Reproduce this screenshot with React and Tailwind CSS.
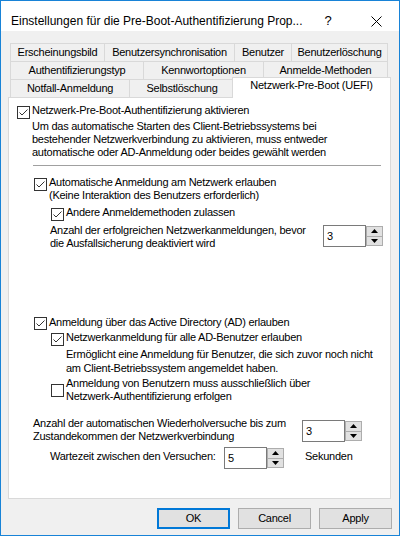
import React from "react";

function CheckBox({ checked }) {
  return (
    <span className="flex h-[13px] w-[13px] shrink-0 items-center justify-center border border-[#333333] bg-white">
      {checked && (
        <svg width="11" height="11" viewBox="0 0 11 11">
          <path d="M1.5 5.5 L4 8 L9.5 2.5" fill="none" stroke="#333333" strokeWidth="1" />
        </svg>
      )}
    </span>
  );
}

function Arrow({ up }) {
  return (
    <svg width="7" height="4" viewBox="0 0 7 4">
      {up ? <path d="M3.5 0 L7 4 L0 4 Z" fill="#000" /> : <path d="M0 0 L7 0 L3.5 4 Z" fill="#000" />}
    </svg>
  );
}

function Spinner({ value }) {
  return (
    <div className="flex h-[22px] w-[60px] shrink-0">
      <div className="w-[43px] border border-[#7a7a7a] bg-white pl-[3px] leading-[20px]">{value}</div>
      <div className="flex w-[17px] flex-col py-[1px]">
        <div className="flex flex-1 items-center justify-center border border-[#adadad] bg-[#e1e1e1]">
          <Arrow up />
        </div>
        <div className="flex flex-1 items-center justify-center border border-t-0 border-[#adadad] bg-[#e1e1e1]">
          <Arrow />
        </div>
      </div>
    </div>
  );
}

function Tab({ w, last, children }) {
  return (
    <div
      style={{ width: w }}
      className={`flex h-[18px] shrink-0 items-center justify-center border-l border-t border-[#d9d9d9] bg-[#f0f0f0] ${
        last ? "border-r" : ""
      }`}
    >
      {children}
    </div>
  );
}

function Button({ children, primary }) {
  return (
    <div
      className={`flex h-[21px] w-[73px] items-center justify-center bg-[#e1e1e1] ${
        primary ? "border-2 border-[#0078d7]" : "border border-[#adadad]"
      }`}
    >
      {children}
    </div>
  );
}

export default function App() {
  return (
    <div className="h-[539px] w-[402px] bg-white font-['Liberation_Sans',Arial,sans-serif] text-[11px] leading-[13px] tracking-[-0.25px] text-black">
      <div className="flex h-[536px] w-[400px] flex-col border border-[#1883d7] bg-[#f0f0f0]">
        {/* title bar */}
        <div className="flex h-[30px] shrink-0 items-center bg-white pl-[10px] pt-[10px] text-[12px] leading-[16px] tracking-normal">
          <span>Einstellungen für die Pre-Boot-Authentifizierung Prop...</span>
          <span className="ml-auto w-[20px] text-center text-[13px]">?</span>
          <svg className="ml-[33px] mr-[17px]" width="11" height="11" viewBox="0 0 11 11">
            <path d="M0.5 0.5 L10.5 10.5 M10.5 0.5 L0.5 10.5" stroke="#000" strokeWidth="1" />
          </svg>
        </div>

        {/* tabs */}
        <div className="ml-[9px] mt-[12px] w-[378px]">
          <div className="flex">
            <Tab w={94}>Erscheinungsbild</Tab>
            <Tab w={130}>Benutzersynchronisation</Tab>
            <Tab w={57}>Benutzer</Tab>
            <Tab w={97} last>Benutzerlöschung</Tab>
          </div>
          <div className="flex">
            <Tab w={133}>Authentifizierungstyp</Tab>
            <Tab w={120}>Kennwortoptionen</Tab>
            <Tab w={125} last>Anmelde-Methoden</Tab>
          </div>
          <div className="flex h-[18px] items-end">
            <Tab w={119}>Notfall-Anmeldung</Tab>
            <Tab w={105}>Selbstlöschung</Tab>
            <div className="relative z-10 mb-[-1px] ml-[-2px] flex h-[21px] w-[159px] shrink-0 justify-center border-x border-t border-[#d9d9d9] bg-white pt-[1px]">
              Netzwerk-Pre-Boot (UEFI)
            </div>
          </div>
        </div>

        {/* panel */}
        <div className="ml-[7px] flex h-[402px] w-[383px] shrink-0 flex-col border border-[#d9d9d9] bg-white">
          <div className="ml-[8px] mt-[6px] flex h-[13px] items-start">
            <span className="mt-[2px]">
              <CheckBox checked />
            </span>
            <span className="ml-[2px]">Netzwerk-Pre-Boot-Authentifizierung aktivieren</span>
          </div>
          <div className="ml-[23px] mt-[3px]">
            Um das automatische Starten des Client-Betriebssystems bei
            <br />
            bestehender Netzwerkverbindung zu aktivieren, muss entweder
            <br />
            automatische oder AD-Anmeldung oder beides gewählt werden
          </div>
          <div className="ml-[24px] mt-[6px] h-px w-[348px] bg-[#a0a0a0]" />

          <div className="ml-[25px] mt-[10px] flex items-start">
            <span className="mt-[2px]">
              <CheckBox checked />
            </span>
            <span className="ml-[2px]">
              Automatische Anmeldung am Netzwerk erlauben
              <br />
              (Keine Interaktion des Benutzers erforderlich)
            </span>
          </div>
          <div className="ml-[42px] mt-[4px] flex h-[13px] items-start">
            <span className="mt-[2px]">
              <CheckBox checked />
            </span>
            <span className="ml-[2px]">Andere Anmeldemethoden zulassen</span>
          </div>
          <div className="ml-[41px] mt-[5px] flex items-start">
            <div className="w-[273px] shrink-0">
              Anzahl der erfolgreichen Netzwerkanmeldungen, bevor
              <br />
              die Ausfallsicherung deaktiviert wird
            </div>
            <div className="mt-[1px]">
              <Spinner value="3" />
            </div>
          </div>

          <div className="ml-[25px] mt-[66px] flex h-[13px] items-start">
            <span className="mt-[1px]">
              <CheckBox checked />
            </span>
            <span className="ml-[2px]">Anmeldung über das Active Directory (AD) erlauben</span>
          </div>
          <div className="ml-[42px] mt-[2px] flex h-[13px] items-start">
            <span className="mt-[2px]">
              <CheckBox checked />
            </span>
            <span className="ml-[2px]">Netzwerkanmeldung für alle AD-Benutzer erlauben</span>
          </div>
          <div className="ml-[57px] mt-[3px] leading-[14px]">
            Ermöglicht eine Anmeldung für Benutzer, die sich zuvor noch nicht
            <br />
            am Client-Betriebssystem angemeldet haben.
          </div>
          <div className="ml-[42px] mt-[2px] flex items-center">
            <CheckBox />
            <span className="ml-[2px]">
              Anmeldung von Benutzern muss ausschließlich über
              <br />
              Netzwerk-Authentifizierung erfolgen
            </span>
          </div>

          <div className="ml-[24px] mt-[14px] flex items-start">
            <div className="w-[269px] shrink-0">
              Anzahl der automatischen Wiederholversuche bis zum
              <br />
              Zustandekommen der Netzwerkverbindung
            </div>
            <div className="mt-[3px]">
              <Spinner value="3" />
            </div>
          </div>
          <div className="ml-[41px] mt-[4px] flex items-start">
            <div className="mt-[3px] w-[174px] shrink-0">Wartezeit zwischen den Versuchen:</div>
            <Spinner value="5" />
            <div className="ml-[21px] mt-[3px]">Sekunden</div>
          </div>
        </div>

        {/* buttons */}
        <div className="mt-[9px] flex justify-end gap-[8px] pr-[7px]">
          <Button primary>OK</Button>
          <Button>Cancel</Button>
          <Button>Apply</Button>
        </div>
      </div>
    </div>
  );
}
